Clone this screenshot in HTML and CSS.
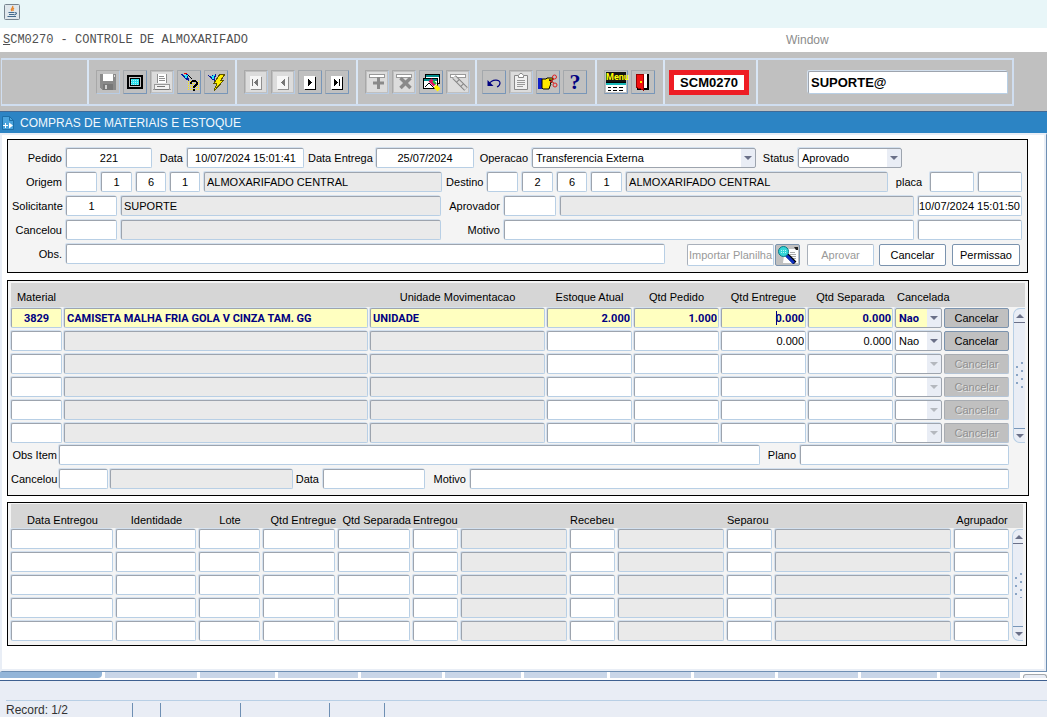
FILE: index.html
```html
<!DOCTYPE html>
<html lang="pt-BR">
<head>
  <meta charset="UTF-8">
  <meta name="viewport" content="width=device-width, initial-scale=1.0">
  <title>SCM0270 - Controle de Almoxarifado</title>
  <link rel="stylesheet" href="styles.css">
</head>
<body>
  <div class="titlebar">
    <svg width="16" height="16" viewBox="0 0 16 16">
      <rect x="0.5" y="0.5" width="15" height="15" rx="1" fill="#dfe7ec" stroke="#76848f"/>
      <path d="M8.5 2c1.500 2-2.500 2.500-.8 5M10 4c-1.800 1-1.200 1.800-.8 3" fill="none" stroke="#e8842a" stroke-width="1.400"/>
      <path d="M4.500 8.500h6M5 10.500h5M3.500 12.500h8.500M11 8.500c2.500 0 1.500 2-.8 2.500" fill="none" stroke="#41698c" stroke-width="1.100"/>
    </svg>
  </div>

  <nav class="menubar">
    <a href="#" class="menu-main"><u>S</u>CM0270 - CONTROLE DE ALMOXARIFADO</a>
    <a href="#" class="menu-window">Window</a>
  </nav>

  <header class="toolbar">
    <div class="tools">
      <div class="group group-empty"></div>

      <div class="group group-file">
        <button class="tool" aria-label="Salvar" disabled>
          <svg viewBox="0 0 20 20"><path d="M2 2h16v16H4l-2-2z" fill="#8a8a8a"/><rect x="5" y="2" width="10" height="7" fill="#fff"/><rect x="5" y="12" width="10" height="6" fill="#777"/><rect x="7" y="13" width="2" height="4" fill="#d0d0d0"/><rect x="16" y="3" width="1" height="2" fill="#ddd"/></svg>
        </button>
        <button class="tool" aria-label="Tela">
          <svg viewBox="0 0 20 20"><rect x="3" y="4" width="14" height="12" fill="#c0c0c0" stroke="#000" stroke-width="2"/><rect x="5.500" y="6.500" width="9" height="7" fill="#2ce0ee" stroke="#000"/><path d="M6 8.500h8M6 10.500h8M6 12.500h8" stroke="#a9f3f8" stroke-dasharray="1 1"/></svg>
        </button>
        <button class="tool" aria-label="Imprimir" disabled>
          <svg viewBox="0 0 20 20"><rect width="20" height="20" fill="#dcdcdc"/><rect x="5" y="2" width="10" height="9" fill="#fff"/><path d="M5.500 11V2M14.500 11V2M7 4.500h5M7 6.500h6M7 8.500h6" stroke="#8f8f8f"/><path d="M3 12.500h14l1 5H2z" fill="#f2f2f2" stroke="#999"/><path d="M3 17.500h14M5 14.500h8" stroke="#777"/></svg>
        </button>
        <button class="tool" aria-label="Consulta">
          <svg viewBox="0 0 20 20"><path d="M9 9.500h11M9 11.500h11M9 13.500h11M9 15.500h11M9 17.500h11" stroke="#fff000" stroke-width="1.500" stroke-dasharray="1 1"/><path d="M2 2l3 1 4-1 1 7-4-2z" fill="#0a1a9c"/><path d="M5 3h4L7 7z" fill="#2ce8f2"/><path d="M5 1h3" stroke="#e00"/><path d="M9 3l4 4" stroke="#000"/><path d="M12 12c0-4 6-4 6-.5 0 2-3 1.500-3 4M15 17v2" fill="none" stroke="#000" stroke-width="2"/></svg>
        </button>
        <button class="tool" aria-label="Executar consulta">
          <svg viewBox="0 0 20 20"><path d="M1 3l4 1 5-2-1 7-4-2z" fill="#0a1a9c"/><path d="M5 4l4-1-2 5z" fill="#2ce8f2"/><path d="M14 2h5l-4 6h3l-10 11 3-8H8z" fill="#ffee00" stroke="#5c5500"/></svg>
        </button>
      </div>

      <div class="group group-nav">
        <button class="tool" aria-label="Primeiro" disabled>
          <svg viewBox="0 0 20 20"><rect width="20" height="20" fill="#dcdcdc"/><rect x="4" y="4" width="11" height="13" fill="#f6f6f6"/><path d="M15.500 5v12.500H5" fill="none" stroke="#8f8f8f"/><path d="M6.500 7v7" stroke="#777"/><path d="M12 7v7l-4-3.500z" fill="#777"/></svg>
        </button>
        <button class="tool" aria-label="Anterior" disabled>
          <svg viewBox="0 0 20 20"><rect width="20" height="20" fill="#dcdcdc"/><rect x="4" y="4" width="11" height="13" fill="#f6f6f6"/><path d="M15.500 5v12.500H5" fill="none" stroke="#8f8f8f"/><path d="M12 7v7l-4-3.500z" fill="#777"/></svg>
        </button>
        <button class="tool" aria-label="Proximo">
          <svg viewBox="0 0 20 20"><rect x="4" y="4" width="11" height="13" fill="#fff"/><path d="M15.500 5v12.500H5" fill="none" stroke="#000"/><path d="M8 7v7l4-3.500z" fill="#000"/></svg>
        </button>
        <button class="tool" aria-label="Ultimo">
          <svg viewBox="0 0 20 20"><rect x="4" y="4" width="11" height="13" fill="#fff"/><path d="M15.500 5v12.500H5" fill="none" stroke="#000"/><path d="M7 7v7l4-3.500z" fill="#000"/><path d="M12.500 7v7" stroke="#000"/></svg>
        </button>
      </div>

      <div class="group group-record">
        <button class="tool" aria-label="Inserir" disabled>
          <svg class="smooth" viewBox="0 0 20 20"><rect width="20" height="20" fill="#dcdcdc"/><rect x="2.500" y="2.500" width="15" height="3" fill="#fff" stroke="#999"/><path d="M11.500 5v12M6 11h11" stroke="#8a8a8a" stroke-width="3"/></svg>
        </button>
        <button class="tool" aria-label="Remover" disabled>
          <svg class="smooth" viewBox="0 0 20 20"><rect width="20" height="20" fill="#dcdcdc"/><rect x="2.500" y="2.500" width="15" height="3" fill="#fff" stroke="#999"/><path d="M6.500 6l10 10M16.500 6l-10 10" stroke="#8a8a8a" stroke-width="3.500"/></svg>
        </button>
        <button class="tool" aria-label="Limpar registro">
          <svg class="smooth" viewBox="0 0 20 20"><rect x="4.500" y="2.500" width="14" height="9" fill="#fff" stroke="#000"/><path d="M5 4h13" stroke="#008c8c" stroke-width="2"/><rect x="2.500" y="6.500" width="14" height="10" fill="#fff" stroke="#000"/><path d="M3 8h13" stroke="#008c8c" stroke-width="2"/><path d="M4 15l4-4 5 5" fill="none" stroke="#000"/><path d="M9 8l5 5" stroke="#e01060" stroke-width="4"/><path d="M12 9l3 3" stroke="#18c040" stroke-width="2"/><path d="M14 14l4 4" stroke="#fff000" stroke-width="4"/></svg>
        </button>
        <button class="tool" aria-label="Limpar tela" disabled>
          <svg class="smooth" viewBox="0 0 20 20"><rect width="20" height="20" fill="#dcdcdc"/><rect x="2.500" y="2.500" width="15" height="3" fill="#fff" stroke="#999"/><path d="M6 5l12 12" stroke="#858585" stroke-width="5"/><path d="M6 5l12 12" stroke="#d8d8d8" stroke-width="3" stroke-dasharray="5 1"/></svg>
        </button>
      </div>

      <div class="group group-edit">
        <button class="tool" aria-label="Desfazer">
          <svg class="smooth" viewBox="0 0 20 20"><path d="M5 12c3-5 11-5 11-1 0 2-1 3-3 4" fill="none" stroke="#000080" stroke-width="1.200"/><path d="M3.500 8v6h6z" fill="#000080"/></svg>
        </button>
        <button class="tool" aria-label="Colar" disabled>
          <svg class="smooth" viewBox="0 0 20 20"><rect width="20" height="20" fill="#dcdcdc"/><path d="M7 3.500H3.500v14h13v-14H13" fill="#f0f0f0" stroke="#888"/><path d="M7.500 5.500v-2L9 1.500h2l1.500 2v2z" fill="#fff" stroke="#888"/><path d="M6 8.500h8M6 10.500h8M6 12.500h8M6 14.500h6" stroke="#999"/></svg>
        </button>
        <button class="tool" aria-label="Selecionar">
          <svg class="smooth" viewBox="0 0 20 20"><rect x="0" y="6" width="4" height="11" fill="#1020c8"/><path d="M4 7h4l1-1h6v2h-4l3 1v1l-2 1 1 1-1 2-1 3H5l-1-1z" fill="#ffe800" stroke="#000"/><g fill="none" stroke="#e02020"><circle cx="16.500" cy="5" r="2"/><circle cx="17" cy="13" r="2"/><path d="M12 10l4-3M12 9l4 2"/></g></svg>
        </button>
        <button class="tool tool-help" aria-label="Ajuda">?</button>
      </div>

      <div class="group group-menu">
        <button class="tool tool-menu" aria-label="Menu">
          <span>Menu</span>
          <svg viewBox="0 0 20 10"><rect width="20" height="10" fill="#fff"/><path d="M0 .5h20" stroke="#000"/><path d="M0 2h20" stroke="#18b8b8" stroke-width="2"/><path d="M2 5.500h3M7 5.500h4M13 5.500h4M2 8.500h3M7 8.500h4M13 8.500h4" stroke="#000"/></svg>
        </button>
        <button class="tool" aria-label="Sair">
          <svg viewBox="0 0 20 20"><rect x="4" y="2" width="11" height="14" fill="#fff"/><path d="M14.500 2v14.500H4" fill="none" stroke="#000" stroke-width="2"/><path d="M3 2h7v16l-7-3z" fill="#f01010" stroke="#900"/><rect x="7" y="9" width="2" height="2" fill="#ffe000"/></svg>
        </button>
      </div>

      <div class="group group-code"><div class="code">SCM0270</div></div>

      <div class="group group-user">
        <input class="field user" type="text" value="SUPORTE@" aria-label="Usuario">
      </div>
    </div>
  </header>

  <div class="caption">
    <svg width="12" height="16" viewBox="0 0 12 16"><path d="M.5 1.500h7l4 4v9H.5z" fill="#4aa3dc" stroke="#1c6fa8"/><path d="M7.500 1.500v4h4" fill="none" stroke="#1c6fa8"/><path d="M1 10.500h5M3.500 8v5" stroke="#fff"/><path d="M7 7.500v6l4-3z" fill="#fff"/></svg>
    <h1>COMPRAS DE MATERIAIS E ESTOQUE</h1>
  </div>

  <main class="content">
    <form class="panel order">
      <div class="row row-order">
        <label for="pedido">Pedido</label>
        <input class="field center" id="pedido" value="221">
        <label for="data">Data</label>
        <input class="field center" id="data" value="10/07/2024 15:01:41">
        <label for="entrega">Data Entrega</label>
        <input class="field center" id="entrega" value="25/07/2024">
        <label for="operacao">Operacao</label>
        <span class="combo"><select class="field" id="operacao"><option>Transferencia Externa</option></select></span>
        <label for="status">Status</label>
        <span class="combo"><select class="field" id="status"><option>Aprovado</option></select></span>
      </div>

      <div class="row row-places">
        <label for="origem">Origem</label>
        <input class="field center" id="origem">
        <input class="field center" value="1" aria-label="Origem empresa">
        <input class="field center" value="6" aria-label="Origem filial">
        <input class="field center" value="1" aria-label="Origem local">
        <input class="field locked" value="ALMOXARIFADO CENTRAL" aria-label="Origem nome" readonly>
        <label for="destino">Destino</label>
        <input class="field center" id="destino">
        <input class="field center" value="2" aria-label="Destino empresa">
        <input class="field center" value="6" aria-label="Destino filial">
        <input class="field center" value="1" aria-label="Destino local">
        <input class="field locked" value="ALMOXARIFADO CENTRAL" aria-label="Destino nome" readonly>
        <label for="placa">placa</label>
        <input class="field" id="placa">
        <input class="field" aria-label="Placa numero">
      </div>

      <div class="row row-people">
        <label for="solicitante">Solicitante</label>
        <input class="field center" id="solicitante" value="1">
        <input class="field locked" value="SUPORTE" aria-label="Solicitante nome" readonly>
        <label for="aprovador">Aprovador</label>
        <input class="field" id="aprovador">
        <input class="field locked" aria-label="Aprovador nome" readonly>
        <input class="field tight" value="10/07/2024 15:01:50" aria-label="Data aprovacao">
      </div>

      <div class="row row-people">
        <label for="cancelou">Cancelou</label>
        <input class="field" id="cancelou">
        <input class="field locked" aria-label="Cancelou nome" readonly>
        <label for="motivo">Motivo</label>
        <input class="field span-2" id="motivo">
        <input class="field" aria-label="Data cancelamento">
      </div>

      <div class="row row-obs">
        <label for="obs">Obs.</label>
        <input class="field" id="obs">
        <div class="actions">
          <button type="button" class="btn btn-import" disabled>Importar Planilha</button>
          <button type="button" class="btn btn-search" aria-label="Pesquisar">
            <svg width="22" height="18" viewBox="0 0 22 18"><path d="M8 3h13v14H6z" fill="#fff"/><path d="M13 6.500h5M13 8.500h6M13 10.500h6M14 12.500h5" stroke="#aaa"/><path d="M17 1h4v3h-2z" fill="#222"/><path d="M10 9l8 8" stroke="#000" stroke-width="4"/><path d="M9 9l8 8" stroke="#1030c0" stroke-width="3"/><circle cx="6.500" cy="5.500" r="5" fill="#35d5d8" stroke="#087888"/><path d="M4 4.500h5M4 6.500h5" stroke="#b6f6f6" stroke-dasharray="1 1"/></svg>
          </button>
          <button type="button" class="btn btn-approve" disabled>Aprovar</button>
          <button type="button" class="btn btn-cancel">Cancelar</button>
          <button type="button" class="btn btn-perm">Permissao</button>
        </div>
      </div>
    </form>

    <section class="panel items">
      <div class="grid">
        <table>
          <colgroup>
            <col class="w-material"><col><col class="w-unit"><col class="w-qty"><col class="w-qty"><col class="w-qty"><col class="w-qty"><col class="w-flag"><col class="w-action">
          </colgroup>
          <thead>
            <tr>
              <th>Material</th>
              <th></th>
              <th>Unidade Movimentacao</th>
              <th>Estoque Atual</th>
              <th>Qtd Pedido</th>
              <th>Qtd Entregue</th>
              <th>Qtd Separada</th>
              <th colspan="2" class="left">Cancelada</th>
            </tr>
          </thead>
          <tbody id="itemRows"></tbody>
        </table>
        <div class="scrollbar">
          <button class="up" aria-label="Subir"></button>
          <div class="track"></div>
          <button class="down" aria-label="Descer"></button>
        </div>
      </div>

      <div class="row row-item">
        <label for="obsItem">Obs Item</label>
        <input class="field" id="obsItem">
        <label for="plano">Plano</label>
        <input class="field" id="plano">
      </div>
      <div class="row row-item-cancel">
        <label for="itemCancelou">Cancelou</label>
        <input class="field" id="itemCancelou">
        <input class="field locked" aria-label="Cancelou item nome" readonly>
        <label for="itemData">Data</label>
        <input class="field" id="itemData">
        <label for="itemMotivo">Motivo</label>
        <input class="field" id="itemMotivo">
      </div>
    </section>

    <section class="panel deliveries">
      <div class="grid">
        <table>
          <colgroup>
            <col class="w-date"><col class="w-ident"><col class="w-lot"><col class="w-amount"><col class="w-amount"><col class="w-code"><col class="w-name"><col class="w-code"><col class="w-name"><col class="w-code"><col><col class="w-group">
          </colgroup>
          <thead>
            <tr>
              <th>Data Entregou</th>
              <th>Identidade</th>
              <th>Lote</th>
              <th class="right">Qtd Entregue</th>
              <th class="right">Qtd Separada</th>
              <th colspan="2" class="left">Entregou</th>
              <th colspan="2" class="left">Recebeu</th>
              <th colspan="2" class="left">Separou</th>
              <th>Agrupador</th>
            </tr>
          </thead>
          <tbody id="deliveryRows"></tbody>
        </table>
        <div class="scrollbar">
          <button class="up" aria-label="Subir"></button>
          <div class="track"></div>
          <button class="down" aria-label="Descer"></button>
        </div>
      </div>
    </section>
  </main>

  <div class="tabs">
    <span class="tab active"></span>
    <span class="tab"></span><span class="tab"></span><span class="tab"></span><span class="tab"></span>
    <span class="tab"></span><span class="tab"></span><span class="tab"></span><span class="tab"></span>
    <span class="tab"></span><span class="tab"></span><span class="tab"></span>
    <span class="tab-end"></span>
  </div>

  <footer class="status">
    <div class="status-line">
      <span class="cell record">Record: 1/2</span>
      <span class="cell s"></span>
      <span class="cell m"></span>
      <span class="cell l"></span>
      <span class="cell n"></span>
    </div>
  </footer>

  <script src="script.js"></script>
</body>
</html>
```
FILE: styles.css
```css
* {
  box-sizing: border-box;
}
body {
  margin: 0;
  min-height: 100vh;
  display: flex;
  flex-direction: column;
  font-family: "Liberation Sans", Arial, sans-serif;
  font-size: 11px;
  color: #000;
  background-color: #fff;
}
input,
select,
button {
  font: inherit;
  color: inherit;
  margin: 0;
}
svg {
  display: block;
}

/* window header */
.titlebar {
  height: 28px;
  padding: 4px;
  background-color: #e8f6f8;
}
.menubar {
  display: flex;
  align-items: center;
  height: 24px;
  padding-left: 3px;
}
.menubar a {
  text-decoration: none;
}
.menu-main {
  width: 75%;
  font-family: "Liberation Mono", "Courier New", monospace;
  font-size: 12px;
  color: #505050;
}
.menu-window {
  font-size: 12px;
  color: #8c8c8c;
}

/* toolbar */
.toolbar {
  padding: 6px 33px 5px 1px;
  background-color: #c0c0c0;
}
.tools {
  display: flex;
  height: 48px;
  border: 1px solid #d0def0;
  border-width: 2px 2px 2px 1px;
}
.group {
  display: flex;
  flex: none;
  align-items: center;
  gap: 3px;
  padding-left: 7px;
  border-left: 2px solid #d9e6f5;
}
.group-empty {
  width: 85px;
  border-left: none;
}
.group-file {
  width: 148px;
}
.group-nav {
  width: 121px;
}
.group-record {
  width: 119px;
}
.group-edit {
  width: 120px;
  padding-left: 5px;
}
.group-menu {
  width: 68px;
}
.group-code {
  width: 93px;
  padding-left: 4px;
}
.group-user {
  flex: 1;
  padding: 0 4px 0 50px;
}
.tool {
  width: 24px;
  height: 24px;
  padding: 1px;
  border: 1px solid;
  border-color: #a4a8ac #7896b8 #7896b8 #a4a8ac;
  background-color: #c0c0c0;
  border-radius: 1px;
}
.tool:disabled {
  border-color: #a8a8a8 #b8cce4 #b8cce4 #a8a8a8;
}
.tool svg {
  width: 20px;
  height: 20px;
  shape-rendering: crispEdges;
}
.tool svg.smooth {
  shape-rendering: auto;
}
.tool-help {
  font-family: "Liberation Serif", serif;
  font-size: 22px;
  line-height: 20px;
  font-weight: bold;
  color: #000080;
}
.tool-menu span {
  display: block;
  height: 10px;
  font-family: Roboto, sans-serif;
  font-size: 9px;
  line-height: 10px;
  font-weight: bold;
  text-align: center;
  color: #ff0;
  background-color: #111;
}
.tool-menu svg {
  height: 10px;
}
.code {
  width: 80px;
  border: 5px solid #ee1c24;
  background-color: #fff;
  font-size: 13px;
  line-height: 15px;
  font-weight: bold;
  text-align: center;
}
.field.user {
  height: 23px;
  font-size: 13px;
  font-weight: bold;
}

.caption {
  display: flex;
  align-items: center;
  gap: 6px;
  height: 22px;
  padding-left: 2px;
  background-color: #2c84c4;
  border-top: 1px solid #416a96;
}
.caption h1 {
  margin: 0;
  font-size: 12px;
  font-weight: normal;
  color: #f2f8fd;
}

/* content */
.content {
  flex: 1;
  padding: 4px 17px 22px 5px;
  border: 2px solid #e9eef6;
  border-right: 1px solid #6e8fb3;
  border-bottom: 1px solid #6e8fb3;
  box-shadow: inset -2px -2px 0 #e9eef6;
}
.panel {
  border: 1px solid #000;
  background-color: #f4f4f4;
}
.order {
  margin-right: 1px;
  padding: 8px 5px 6px 4px;
}
.items {
  margin-top: 7px;
  padding: 2px 3px 6px;
}
.deliveries {
  margin: 6px 2px 0 0;
  padding: 1px 3px 4px;
}
.row {
  display: grid;
  column-gap: 4px;
  margin-bottom: 4px;
}
.row:last-child {
  margin-bottom: 0;
}
.row label {
  text-align: right;
  line-height: 20px;
  white-space: nowrap;
}
.row-order {
  grid-template-columns: 50px 86px 27px 117px 64px 98px 50px 1fr 34px 104px 116px;
}
.row-places {
  grid-template-columns: 50px 31px 31px 30px 30px 10fr 37px 31px 31px 30px 31px 11fr 34px 44px 44px;
}
.row-places label[for="placa"] {
  text-align: center;
}
.row-people {
  grid-template-columns: 50px 51px 320px 55px 52px 1fr 104px;
}
.span-2 {
  grid-column: span 2;
}
.row-obs {
  grid-template-columns: 50px 1fr auto;
}

/* fields */
.field {
  width: 100%;
  min-width: 0;
  height: 20px;
  padding: 0 2px;
  border: 1px solid;
  border-color: #9da4ae #b8cfe5 #b8cfe5 #9da4ae;
  border-radius: 2px;
  background-color: #fff;
  box-shadow: -1px -1px 0 #d3e0ee;
  outline: none;
}
.field.center {
  text-align: center;
}
.field.tight {
  padding: 0;
}
.field.num {
  padding: 0 1px;
  text-align: right;
}
.field.locked {
  background-color: #eaeaea;
}
.combo {
  position: relative;
  display: block;
}
.combo select {
  appearance: none;
  padding: 0 16px 0 3px;
  border-color: #9da4ae;
  background-image: linear-gradient(#e9edf5, #e9edf5);
  background-repeat: no-repeat;
  background-position: right;
  background-size: 14px 100%;
}
.combo select:disabled {
  opacity: 1;
}
.combo::after {
  content: "";
  position: absolute;
  right: 4px;
  top: 8px;
  border: 4px solid transparent;
  border-top-color: #6a7088;
  border-bottom: none;
  pointer-events: none;
}
.combo.off::after {
  border-top-color: #b4b8be;
}

/* buttons */
.actions {
  display: flex;
  margin: 0 2px 0 18px;
}
.btn {
  height: 22px;
  padding: 0;
  border: 1px solid #7b93ae;
  border-radius: 2px;
  background-color: #fff;
  white-space: nowrap;
}
.btn:disabled {
  color: #999;
  border-color: #a9b0ba #b8cfe5 #b8cfe5 #a9b0ba;
}
.btn-import {
  width: 87px;
}
.btn-search {
  width: 25px;
  margin: 0 7px 0 1px;
  padding: 0 1px;
  background-color: #c0c0c0;
}
.btn-approve {
  width: 67px;
}
.btn-cancel {
  width: 67px;
  margin: 0 6px 0 5px;
}
.btn-perm {
  width: 68px;
}
.btn-line {
  display: block;
  width: 100%;
  height: 20px;
  background-color: #c0c0c0;
}
.btn-line:disabled {
  color: #909090;
  text-shadow: 1px 1px 0 #e6e6e6;
  border-color: #a8acb2 #b4c4d6 #b4c4d6 #a8acb2;
}

/* grids */
.grid {
  display: flex;
  background: linear-gradient(#d6d6d6, #d6d6d6) top / 100% 24px no-repeat;
}
.items .grid {
  margin-bottom: 2px;
}
.grid table {
  flex: 1;
  width: 0;
  table-layout: fixed;
  border-collapse: collapse;
}
.grid th {
  height: 25px;
  padding: 2px 2px 0 0;
  font-weight: normal;
  line-height: 14px;
  white-space: nowrap;
}
.grid td {
  position: relative;
  height: 23px;
  padding: 0 2px 3px 0;
}
.grid th.left {
  padding-left: 2px;
  text-align: left;
}
.grid th.right {
  padding-right: 2px;
  text-align: right;
}
.items tr:last-child td,
.deliveries tr:last-child td {
  height: 20px;
  padding-bottom: 0;
}
.deliveries .grid th {
  padding-top: 6px;
}
.deliveries .grid th.left {
  padding-left: 0;
}
.deliveries td {
  padding-right: 3px;
}
.w-material { width: 53px; }
.w-unit { width: 177px; }
.w-qty { width: 87px; }
.w-flag { width: 49px; }
.w-action { width: 67px; }
.w-date { width: 105px; }
.w-ident { width: 83px; }
.w-lot { width: 64px; }
.w-amount { width: 75px; }
.w-code { width: 48px; }
.w-name { width: 109px; }
.w-group { width: 58px; }

.current .field {
  background-color: #ffffc0;
  font-family: Roboto, "Liberation Sans", sans-serif;
  font-weight: bold;
  color: #000080;
}
.caret {
  position: absolute;
  right: 31px;
  top: 3px;
  width: 1px;
  height: 14px;
  background-color: #000080;
}

.scrollbar {
  display: flex;
  flex: none;
  flex-direction: column;
  width: 12px;
  margin: 25px 0 0 2px;
  border: 1px solid #b8cfe5;
  border-right: none;
  border-radius: 7px 0 0 7px;
  background-color: #e9edf5;
}
.deliveries .scrollbar {
  width: 11px;
  margin-left: 0;
}
.scrollbar button {
  position: relative;
  height: 14px;
  padding: 0;
  border: none;
  background: none;
}
.scrollbar .up {
  border-bottom: 1px solid #6a7088;
}
.scrollbar .down {
  border-top: 1px solid #7896b8;
}
.scrollbar button::after {
  content: "";
  position: absolute;
  left: 2px;
  top: 5px;
  border: 4px solid transparent;
}
.scrollbar .up::after {
  border-top: none;
  border-bottom-color: #6a7088;
}
.scrollbar .down::after {
  border-bottom: none;
  border-top-color: #6a7088;
}
.track {
  flex: 1;
  background: radial-gradient(circle at 2px 2px, #8aa4c4 1px, transparent 1px) 1px 4px / 20px 8px repeat-y,
    radial-gradient(circle at 2px 2px, #8aa4c4 1px, transparent 1px) 6px 0 / 20px 8px repeat-y;
  background-origin: content-box;
  background-clip: content-box;
  padding: 38px 0;
}
.deliveries .track {
  padding: 28px 0;
}

/* item footer rows */
.row-item,
.row-item-cancel {
  column-gap: 2px;
  padding-right: 16px;
}
.row-item {
  grid-template-columns: 46px 1fr 36px 209px;
}
.row-item-cancel {
  grid-template-columns: 46px 49px 183px 26px 102px 41px 1fr;
}
.row-item label:not(:first-child),
.row-item-cancel label:not(:first-child) {
  padding-right: 2px;
}

/* bottom */
.tabs {
  display: grid;
  grid-template-columns: 102fr 92fr 75fr 80fr 81fr 76fr 83fr 81fr 81fr 80fr 76fr 80fr 24fr;
  column-gap: 3px;
  height: 8px;
  padding-bottom: 2px;
}
.tab {
  background-color: #c9d6e8;
}
.tab.active {
  background-color: #93b5d8;
  border-radius: 0 0 4px 0;
}
.tab-end {
  margin-top: 2px;
  border: 1px solid #a4a8ac;
  border-bottom: none;
  border-radius: 3px 3px 0 0;
  background-color: #e9edf5;
}
.status {
  height: 37px;
  padding: 19px 0 0 6px;
  border-top: 1px solid #3e6090;
  background-color: #e9edf5;
}
.status-line {
  display: flex;
  height: 17px;
  padding-top: 2px;
  border-top: 1px solid #b8cfe5;
}
.cell {
  flex: none;
  border-right: 1px solid #6e8fb3;
  line-height: 15px;
}
.record {
  width: 127px;
  font-size: 12px;
  color: #333;
}
.cell.s { width: 28px; }
.cell.m { width: 80px; }
.cell.l { width: 89px; }
.cell.n { width: 55px; }
```
FILE: script.js
```javascript
const items = [
  { material: '3829', name: 'CAMISETA MALHA FRIA GOLA V CINZA TAM. GG', unit: 'UNIDADE', qty: ['2.000', '1.000', '0.000', '0.000'], flag: 'Nao' },
  { material: '', name: '', unit: '', qty: ['', '', '0.000', '0.000'], flag: 'Nao' },
  {}, {}, {}, {}
];
const qtyNames = ['Estoque Atual', 'Qtd Pedido', 'Qtd Entregue', 'Qtd Separada'];

function field(label, value = '', cls = '') {
  const readonly = cls === 'locked' ? ' readonly' : '';
  return `<input class="field ${cls}" aria-label="${label}" value="${value}"${readonly}>`;
}

document.getElementById('itemRows').innerHTML = items.map((item, i) => {
  const off = item.flag ? '' : 'disabled';
  const qty = item.qty ?? ['', '', '', ''];
  const cells = qty.map((q, n) => {
    const caret = i === 0 && n === 2 ? '<span class="caret"></span>' : '';
    return `<td>${field(qtyNames[n], q, 'num')}${caret}</td>`;
  }).join('');
  return `<tr class="${i === 0 ? 'current' : ''}">
    <td>${field('Material', item.material, 'center')}</td>
    <td>${field('Descricao', item.name, 'locked')}</td>
    <td>${field('Unidade Movimentacao', item.unit, 'locked')}</td>
    ${cells}
    <td><span class="combo ${off ? 'off' : ''}"><select class="field" aria-label="Cancelada" ${off}><option>${item.flag ?? ''}</option></select></span></td>
    <td><button class="btn btn-line" ${off}>Cancelar</button></td>
  </tr>`;
}).join('');

const deliveryColumns = [
  ['Data Entregou'], ['Identidade'], ['Lote'], ['Qtd Entregue'], ['Qtd Separada'],
  ['Entregou'], ['Entregou nome', 'locked'],
  ['Recebeu'], ['Recebeu nome', 'locked'],
  ['Separou'], ['Separou nome', 'locked'],
  ['Agrupador']
];
const deliveryRow = '<tr>' + deliveryColumns.map(([label, cls]) => `<td>${field(label, '', cls)}</td>`).join('') + '</tr>';
document.getElementById('deliveryRows').innerHTML = deliveryRow.repeat(5);
```
